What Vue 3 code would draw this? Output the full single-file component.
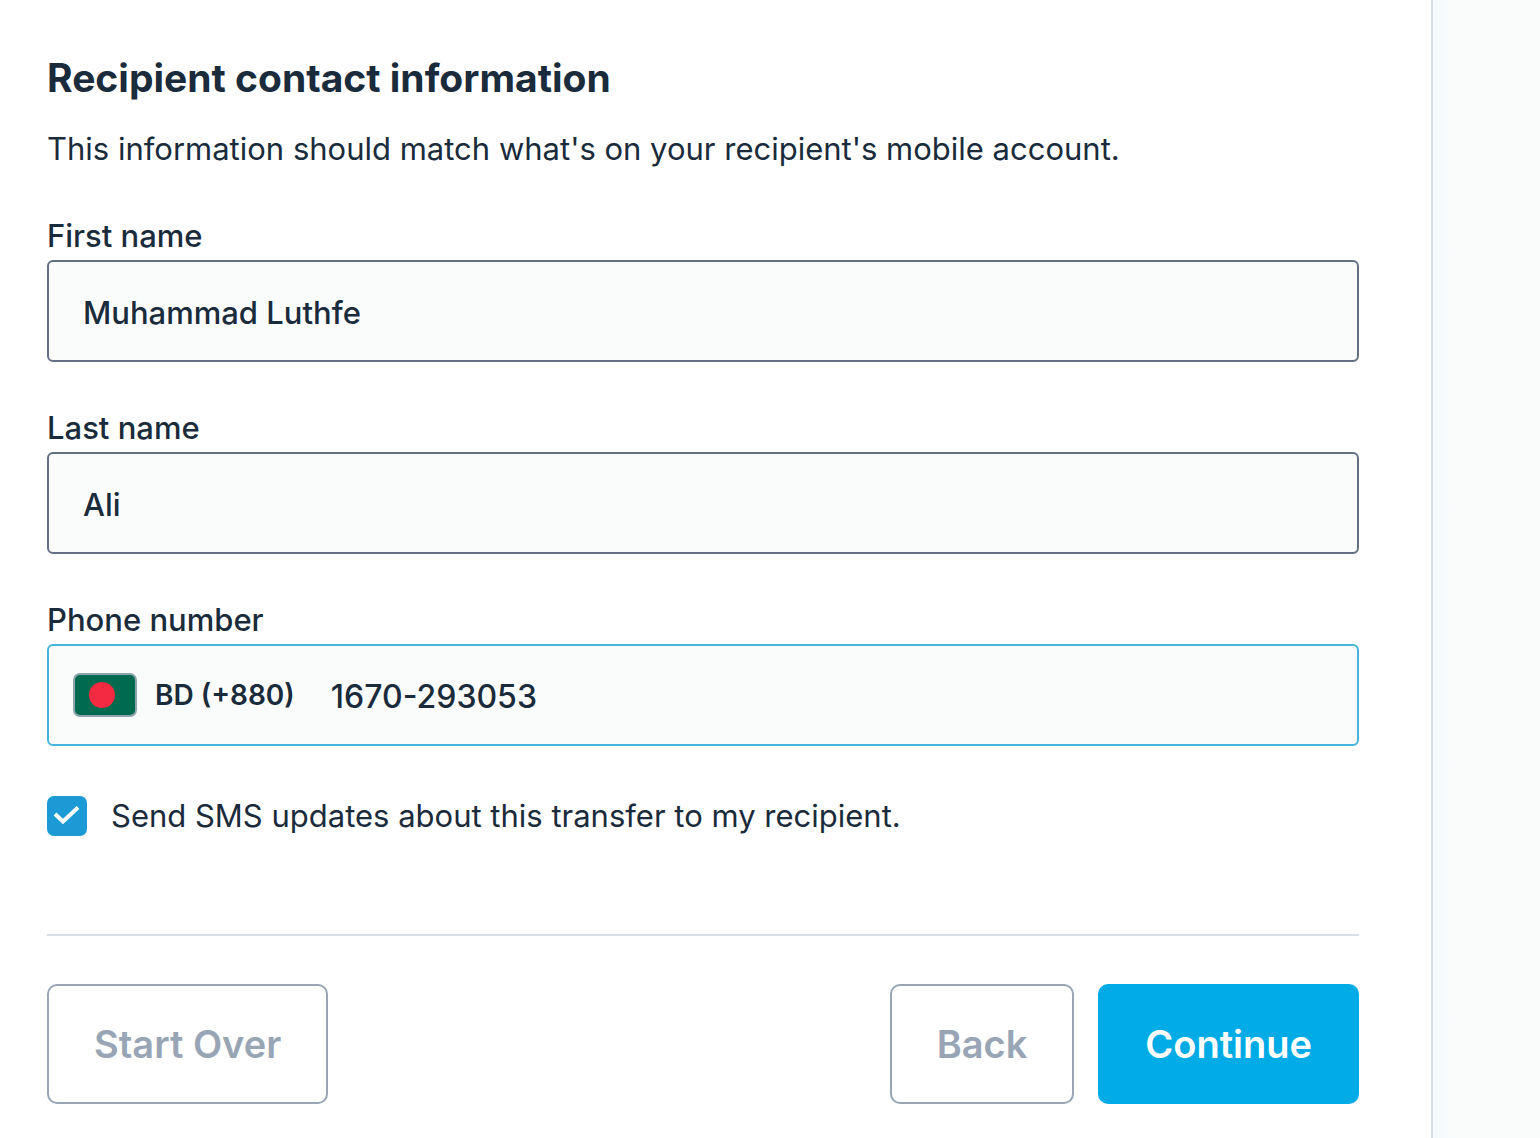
<script setup>
import { ref } from 'vue'

const firstName = ref('Muhammad Luthfe')
const lastName = ref('Ali')
const phone = ref('1670-293053')
const sms = ref(true)
</script>

<template>
  <div class="page">
    <main class="panel">
      <form @submit.prevent>
        <h1>Recipient contact information</h1>
        <p class="intro">This information should match what's on your recipient's mobile account.</p>

        <div class="field">
          <label for="first-name">First name</label>
          <input id="first-name" v-model="firstName" class="box" type="text" />
        </div>
        <div class="field">
          <label for="last-name">Last name</label>
          <input id="last-name" v-model="lastName" class="box" type="text" />
        </div>
        <div class="field">
          <label for="phone">Phone number</label>
          <div class="box phone">
            <svg class="flag" viewBox="0 0 64 44" aria-hidden="true">
              <rect x="1" y="1" width="62" height="42" rx="6" fill="#006a4e" stroke="#8fa5ae" stroke-width="2" />
              <circle cx="29" cy="22" r="13" fill="#f42a41" />
            </svg>
            <span class="code">BD (+880)</span>
            <input id="phone" v-model="phone" type="tel" />
          </div>
        </div>

        <label class="sms">
          <input v-model="sms" type="checkbox" />
          <span>Send SMS updates about this transfer to my recipient.</span>
        </label>

        <div class="actions">
          <button type="button">Start Over</button>
          <button type="button" class="back">Back</button>
          <button type="submit" class="primary">Continue</button>
        </div>
      </form>
    </main>
    <div class="margin"></div>
  </div>
</template>

<style>
body {
  margin: 0;
  background: #fafcfc;
}
</style>

<style scoped>
.page {
  min-height: 100vh;
  display: flex;
  color: #1a2b3b;
  font-family: Inter, "Liberation Sans", sans-serif;
}
.panel {
  box-sizing: border-box;
  flex: 1;
  padding: 54px 72px 34px 47px;
  background: #fff;
  border-right: 2px solid #d9dfe7;
}
.margin {
  width: 107px;
  background: linear-gradient(to right, #f5f9fd, #fafcfc 20px);
}
h1 {
  margin: 0;
  font-size: 39px;
  line-height: 48px;
  font-weight: 700;
}
.intro {
  margin: 23px 0 39px;
  font-size: 31px;
  line-height: 48px;
}
.field {
  margin-bottom: 42px;
  font-size: 31px;
  font-weight: 500;
}
.field label {
  display: block;
  line-height: 48px;
}
.box {
  box-sizing: border-box;
  display: block;
  width: 100%;
  height: 102px;
  padding: 2px 34px 0;
  border: 2px solid #637083;
  border-radius: 6px;
  background: #fafcfc;
}
input {
  color: inherit;
  font: inherit;
  outline: none;
}
.phone {
  display: flex;
  align-items: center;
  padding: 0 24px;
  border-color: #45b5dc;
}
.flag {
  width: 64px;
  height: 44px;
}
.code {
  margin: 0 36px 0 18px;
  font-size: 28px;
  font-weight: 600;
}
.phone input {
  flex: 1;
  min-width: 0;
  padding: 2px 0 0;
  border: 0;
  background: transparent;
  font-size: 32px;
}
.sms {
  display: flex;
  align-items: center;
  gap: 24px;
  margin-top: 46px;
  font-size: 31px;
  line-height: 48px;
}
.sms input {
  appearance: none;
  width: 40px;
  height: 40px;
  margin: 0;
  border-radius: 7px;
  background: #1b9ad6;
}
.sms input:checked {
  background: #1b9ad6 url("data:image/svg+xml,%3Csvg xmlns='http://www.w3.org/2000/svg' viewBox='0 0 40 40'%3E%3Cpath d='M8 18l8 7.500 15-14' fill='none' stroke='white' stroke-width='4'/%3E%3C/svg%3E") center / 40px 40px;
}
.actions {
  display: flex;
  gap: 24px;
  margin-top: 94px;
  padding-top: 48px;
  border-top: 2px solid #d9dfe8;
}
button {
  height: 120px;
  padding: 0 45px;
  border: 2px solid #98a5b5;
  border-radius: 10px;
  background: #fff;
  color: #98a5b5;
  font: 600 38px/48px Inter, "Liberation Sans", sans-serif;
}
.back {
  margin-left: auto;
}
.primary {
  border-color: #00abe6;
  background: #00abe6;
  color: #fff;
}
</style>
